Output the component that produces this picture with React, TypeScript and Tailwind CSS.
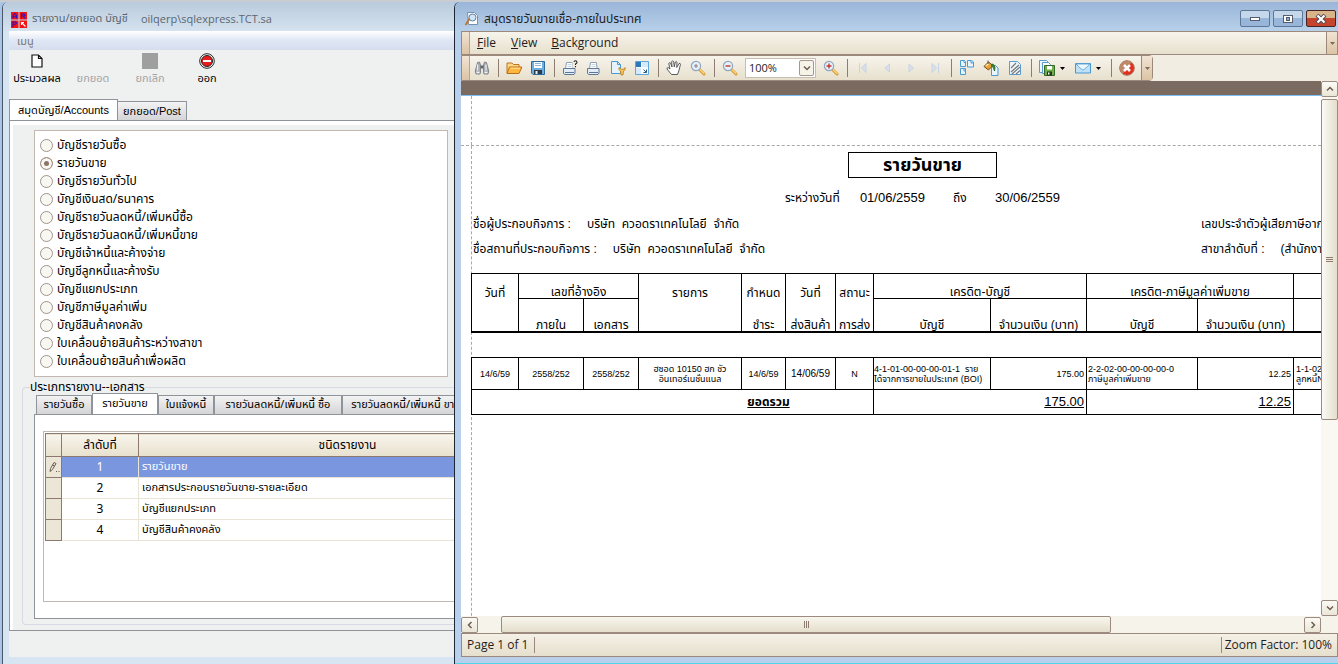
import { useState, type ReactNode } from "react";
import clsx from "clsx";

const accounts = [
  "บัญชีรายวันซื้อ",
  "รายวันขาย",
  "บัญชีรายวันทั่วไป",
  "บัญชีเงินสด/ธนาคาร",
  "บัญชีรายวันลดหนี้/เพิ่มหนี้ซื้อ",
  "บัญชีรายวันลดหนี้/เพิ่มหนี้ขาย",
  "บัญชีเจ้าหนี้และค้างจ่าย",
  "บัญชีลูกหนี้และค้างรับ",
  "บัญชีแยกประเภท",
  "บัญชีภาษีมูลค่าเพิ่ม",
  "บัญชีสินค้าคงคลัง",
  "ใบเคลื่อนย้ายสินค้าระหว่างสาขา",
  "ใบเคลื่อนย้ายสินค้าเพื่อผลิต",
];

const docTabs = [
  { label: "รายวันซื้อ", width: "w-14" },
  { label: "รายวันขาย", width: "w-[66px]" },
  { label: "ใบแจ้งหนี้", width: "w-14" },
  { label: "รายวันลดหนี้/เพิ่มหนี้ ซื้อ", width: "w-32" },
  { label: "รายวันลดหนี้/เพิ่มหนี้ ขาย", width: "w-32" },
];

const reports = [
  "รายวันขาย",
  "เอกสารประกอบรายวันขาย-รายละเอียด",
  "บัญชีแยกประเภท",
  "บัญชีสินค้าคงคลัง",
];

function Svg({ children }: { children: ReactNode }) {
  return (
    <svg viewBox="0 0 16 16" className="h-4 w-4 shrink-0" fill="none" aria-hidden="true">
      {children}
    </svg>
  );
}

function Lens({ sign }: { sign: "dot" | "minus" | "plus" }) {
  return (
    <Svg>
      <path d="M9.5 9.5l4.5 4.5" stroke="#d9972f" strokeWidth="3" strokeLinecap="round" />
      <path d="M9.8 9.4l4.2 4.2" stroke="#f9d67c" strokeWidth="1.4" strokeLinecap="round" />
      <circle cx="6" cy="6" r="4.6" fill="#e4f0fa" stroke="#8fa6c0" strokeWidth="1.2" />
      {sign === "dot" && <circle cx="6" cy="6" r="1.4" fill="#e07050" stroke="#9cb4d0" />}
      {sign === "minus" && <path d="M3.5 6h5" stroke="#c03a28" strokeWidth="1.4" />}
      {sign === "plus" && <path d="M3.5 6h5M6 3.5v5" stroke="#c03a28" strokeWidth="1.4" />}
    </Svg>
  );
}

function Printer({ ask }: { ask?: boolean }) {
  return (
    <Svg>
      <path d="M3.5 8.5l1-6h6l.5 6" fill="#fff" stroke="#8ca0ba" />
      <path d="M1.5 8.5h11.5v4.5l-1 1.5H2.5l-1-1.5z" fill="#e2ecf6" stroke="#5f7896" />
      <path d="M3 12.5h9" stroke="#5f7896" />
      <path d="M5.5 4.5h4M5.5 6.5h4" stroke="#c5d6e6" />
      {ask && <rect x="10.5" y="0" width="5.5" height="7.5" fill="#f2eee2" />}
      {ask && <path d="M12 2q.2-1.3 1.5-1.3T15 2.2q0 .9-1.5 1.8v1M13.5 6v1.2" stroke="#222" strokeWidth="1.1" />}
    </Svg>
  );
}

const tools: { name: string; icon: ReactNode; menu?: boolean; sep?: boolean }[] = [
  {
    name: "Find",
    sep: true,
    icon: (
      <Svg>
        <path d="M3.5 2.5l2-.5 1 3v7l-.5 2H2l-.7-3z" fill="#a9adb4" stroke="#6d727b" strokeWidth=".8" />
        <path d="M12.5 2.5l-2-.5-1 3v7l.5 2h4l.7-3z" fill="#a9adb4" stroke="#6d727b" strokeWidth=".8" />
        <path d="M6.8 5.5h2.4v3H6.8z" fill="#62666e" />
        <path d="M3.5 4.5v6M12 4.5v6" stroke="#eef0f3" strokeWidth="1.2" />
        <path d="M2.5 12.5h3M10.5 12.5h3" stroke="#f1f3f5" strokeWidth="1.5" />
      </Svg>
    ),
  },
  {
    name: "Open",
    icon: (
      <Svg>
        <path d="M1 13V3h5l1.5 1.5H13V7" fill="#ffd981" stroke="#b9762a" />
        <path d="M1 13.5L3.5 7H16l-3 6.5z" fill="#ffb83d" stroke="#bd6c16" />
        <path d="M4.5 8.2H14" stroke="#ffe4a4" />
      </Svg>
    ),
  },
  {
    name: "Save",
    sep: true,
    icon: (
      <Svg>
        <path d="M1.5 1.5h13v13H3L1.5 13z" fill="#6eafe0" stroke="#2f6b9c" />
        <path d="M4 2h8v6H4z" fill="#fff" />
        <path d="M5 3.5h6M5 5.5h6" stroke="#8fb5d6" />
        <path d="M4 10h8v4H4z" fill="#2c3b4a" />
        <path d="M5.5 11h2v3h-2z" fill="#e9f1f8" />
      </Svg>
    ),
  },
  { name: "Print", icon: <Printer ask /> },
  { name: "Quick Print", icon: <Printer /> },
  {
    name: "Page Setup",
    icon: (
      <Svg>
        <path d="M1.5 1.5h6l3 3v9h-9z" fill="#e6f3fd" stroke="#4b97cf" />
        <path d="M7.5 1.5v3h3" stroke="#4b97cf" />
        <path d="M9 7.5q-1 2.5 1.5 3.5l.5 4h2l.5-4Q16 10 15 7.5l-1.5 1.8h-2z" fill="#f6c85a" stroke="#bb7a1b" strokeWidth=".8" />
      </Svg>
    ),
  },
  {
    name: "Scale",
    sep: true,
    icon: (
      <Svg>
        <path d="M1.5 1.5h13v13h-13z" fill="#fafdff" stroke="#5fa5da" />
        <path d="M2 2h5v5H2z" fill="#2c78b8" />
        <path d="M8 2h6v5H8zM2 8h5v6H2z" fill="#d5eafa" />
        <path d="M9.5 9.5l3 3M12.5 9.5v3h-3" stroke="#275c88" />
      </Svg>
    ),
  },
  {
    name: "Hand Tool",
    icon: (
      <Svg>
        <path
          d="M5.5 14.5L1 9q-.3-1.7 1.5-1.2L4 9 2.8 3.7q.2-1.6 1.7-.7L6 7 5.7 1.5q.8-1.3 1.9 0L8.3 7l1-5q1-1 1.7.2L10.7 7.5 13 3.5q1.4-.6 1.5.8L12.8 11l-1.3 3.5z"
          fill="#fff"
          stroke="#4b4b4b"
          strokeWidth=".9"
        />
      </Svg>
    ),
  },
  { name: "Magnifier", sep: true, icon: <Lens sign="dot" /> },
];

const nav = [
  { name: "First Page", d: "M4.5 3v10M11 3.5L6.5 8l4.5 4.5z" },
  { name: "Previous Page", d: "M10.5 4L6 8l4.5 4z" },
  { name: "Next Page", d: "M6 4l4.5 4L6 12z" },
  { name: "Last Page", d: "M11.5 3v10M5 3.5L9.5 8 5 12.5z" },
];

const exportTools: typeof tools = [
  {
    name: "Multiple Pages",
    icon: (
      <Svg>
        <path d="M1.5.5h4l1 1v5h-5zM8.5.5h4l2 1.5v5h-6zM1.5 8.5h5v6h-5z" fill="#e8f5fe" stroke="#4b9bd1" />
        <path d="M5 1v1.5h1.5M12 1v2h2.5M5 9v2h1.5" stroke="#4b9bd1" />
      </Svg>
    ),
  },
  {
    name: "Background Color",
    icon: (
      <Svg>
        <path d="M8.5 5.5h4l2.5 2.5v7.5H8.5z" fill="#e8f5fe" stroke="#4b97cf" />
        <path d="M1 6.5L5.5 2 10 5.5 5.5 10z" fill="#e8a234" stroke="#7a4d13" />
        <path d="M3 6l2.7-2.5" stroke="#fff0b5" strokeWidth="1.3" />
        <path d="M5 4V.5" stroke="#555" />
        <path d="M9 4q4 .5 2.5 7-.5-4-3-5z" fill="#3c8b35" stroke="#276c25" />
      </Svg>
    ),
  },
  {
    name: "Watermark",
    sep: true,
    icon: (
      <Svg>
        <path d="M2.5 1.5h8l3 3v10h-11z" fill="#eef6fd" stroke="#5b9bcd" />
        <path d="M4 8l5-5M4 12l8-7M5 14l8-7M9 14l4-3.5" stroke="#77797c" strokeWidth="1.2" />
      </Svg>
    ),
  },
  {
    name: "Export Document",
    menu: true,
    icon: (
      <Svg>
        <path d="M.5.5h7l2 2v10h-9z" fill="#edf7ff" stroke="#5b9bcd" />
        <path d="M3.5 2.5h6l2 2v9h-8z" fill="#fff" stroke="#5b9bcd" />
        <path d="M5.5 5.5h10v10h-10z" fill="#6fae49" stroke="#35692a" />
        <path d="M8 6h5v3.5H8z" fill="#fff" />
        <path d="M8 11.5h5v4H8z" fill="#24391b" />
        <path d="M9 12.5h1.5v2H9z" fill="#fff" />
      </Svg>
    ),
  },
  {
    name: "Send via E-Mail",
    menu: true,
    sep: true,
    icon: (
      <Svg>
        <path d="M.5 3.5h15v9.5H.5z" fill="#bfe1f8" stroke="#4b96ce" />
        <path d="M1 4q6 6 7 6t7-6z" fill="#eef8ff" stroke="#64a8d9" />
      </Svg>
    ),
  },
  {
    name: "Exit",
    icon: (
      <Svg>
        <circle cx="8" cy="8" r="7.3" fill="#e0301f" stroke="#a8765a" />
        <path d="M1 9a7 7 0 0 1 12-6Q7 4 4 14 1.5 12 1 9z" fill="#bd8a6c" />
        <path d="M5 5l6 6M11 5l-6 6" stroke="#fff" strokeWidth="2.6" />
      </Svg>
    ),
  },
];

function Separator() {
  return (
    <div className="flex w-2 justify-center">
      <div className="h-[18px] w-px bg-[#8f7d72]" />
    </div>
  );
}

function ToolButtons({ items }: { items: typeof tools }) {
  return items.map((t) => (
    <div key={t.name} className="flex items-center">
      <button type="button" aria-label={t.name} className={clsx("flex h-6 items-center", t.menu ? "w-9 gap-1 pl-1" : "w-6 justify-center")}>
        {t.icon}
        {t.menu && <Caret />}
      </button>
      {t.sep && <Separator />}
    </div>
  ));
}

function Caret({ muted }: { muted?: boolean }) {
  return (
    <svg viewBox="0 0 5 3" className="ml-px h-[3px] w-[5px] shrink-0" aria-hidden="true">
      <path d="M0 0h5L2.5 3z" fill={muted ? "#7d6a5e" : "#000"} />
    </svg>
  );
}

function Grip() {
  return <div className="w-2 shrink-0 self-stretch border-r border-[#b9a390] bg-linear-to-b from-[#f1e4d3] to-[#dcc3a5]" />;
}

function Chevron({ d }: { d: string }) {
  return (
    <svg viewBox="0 0 8 8" className="h-2 w-2" fill="none" stroke="#6e5c52" strokeWidth="1.5" aria-hidden="true">
      <path d={d} />
    </svg>
  );
}

function ScrollButton({ label, d }: { label: string; d: string }) {
  return (
    <button
      type="button"
      aria-label={label}
      className="flex h-4 w-[17px] shrink-0 items-center justify-center rounded-xs border border-[#9c8b80] bg-linear-to-b from-[#fbfaf5] to-[#ebe6d6]"
    >
      <Chevron d={d} />
    </button>
  );
}

function AccountsWindow() {
  const [account, setAccount] = useState(1);
  return (
    <section className="ml-[2px] flex w-[452px] shrink-0 flex-col overflow-hidden rounded-tl-md border-l border-[#4a5766] bg-[#d7e4f1] pl-[6px] font-['Noto_Sans_Thai','Noto_Sans',sans-serif] text-[11px] text-black">
      <header className="-ml-[6px] flex h-[29px] shrink-0 items-center gap-[5px] bg-linear-to-b from-[#b9cbdc] to-[#d5e2ef] pt-[6px] pl-2 text-[#5c6670]">
        <svg viewBox="0 0 16 16" className="h-4 w-4 shrink-0" fill="none" aria-hidden="true">
          <path d="M0 0h7.5v7.5H0zM8.5 0H16v7.5H8.5zM0 8.5h7.5V16H0zM8.5 8.5H16V16H8.5z" fill="#f21414" />
          <path d="M2 6.5V3.5L3.8 1.5 5.5 3.5v3M2 4.7h3.5M10.5 6.5V2h2.5l1 1-1 1h-2.5M12.3 4l1.7 2.5M2 15v-5h2.5l1 1-1 1.3H2" stroke="#2a12c4" strokeWidth="1.1" />
          <path d="M10.5 10.5l4 4M10.5 13v-2.5H13" stroke="#fff" strokeWidth="1.1" />
        </svg>
        <h1 className="whitespace-nowrap text-[11px]">รายงาน/ยกยอด บัญชี</h1>
        <span className="ml-2 font-['Open_Sans',sans-serif] text-[11px]">oilqerp\sqlexpress.TCT.sa</span>
      </header>
      <div className="flex h-[19px] shrink-0 items-center bg-linear-to-b from-white via-[#dfe6f4] to-[#d6ddee] pt-1 pl-2 text-[#777]">เมนู</div>

      <div className="flex flex-1 flex-col bg-[#eff0f0]">
        <div className="flex h-[49px] shrink-0 items-start pt-[3px]">
          <button type="button" className="flex w-14 flex-col items-center gap-[2px]">
            <svg viewBox="0 0 12 14" className="h-4 w-3" fill="#fff" stroke="#111" strokeWidth="1.2" aria-hidden="true">
              <path d="M1 1h6.5L11 4.5V13H1zM7.5 1v3.5H11" />
            </svg>
            <span className="whitespace-nowrap">ประมวลผล</span>
          </button>
          <button type="button" disabled className="flex w-14 flex-col items-center pt-[18px] text-[#a3a3a3]">
            ยกยอด
          </button>
          <button type="button" disabled className="flex w-[58px] flex-col items-center gap-[2px] text-[#a3a3a3]">
            <span className="h-4 w-4 bg-[#9f9f9f]" />
            ยกเลิก
          </button>
          <button type="button" className="flex w-14 flex-col items-center gap-[2px]">
            <Svg>
              <circle cx="8" cy="8" r="7.3" fill="#fff" stroke="#222" />
              <circle cx="8" cy="8" r="5.5" fill="#e81c1c" stroke="#222" />
              <path d="M4 8h8" stroke="#fff" strokeWidth="2" />
            </Svg>
            ออก
          </button>
        </div>

        <div role="tablist" className="flex h-[21px] shrink-0 items-end font-['Liberation_Sans','Noto_Sans_Thai',sans-serif]">
          <button type="button" role="tab" aria-selected="true" className="h-[21px] w-[109px] whitespace-nowrap border border-b-0 border-[#8f949b] bg-white text-[11px]">
            สมุดบัญชี/Accounts
          </button>
          <button type="button" role="tab" aria-selected="false" className="h-[19px] w-[69px] whitespace-nowrap border border-b-0 border-l-0 border-[#8f949b] bg-linear-to-b from-[#f3f3f3] to-[#d5d5d8]">
            ยกยอด/Post
          </button>
        </div>

        <div className="flex flex-1 flex-col border-y border-l border-[#8f949b] bg-white pt-1 pl-[3px]">
          <div className="flex flex-1 flex-col bg-[#eff0f0] pt-[5px] pb-[5px] pl-[9px]">
            <div role="radiogroup" aria-label="สมุดบัญชี" className="mr-[6px] ml-3 border border-[#c3b8af] bg-white pt-[5px] pb-[6px] pl-[5px] text-xs">
              {accounts.map((a, i) => (
                <label key={a} className="flex h-[18px] items-center gap-1">
                  <input
                    type="radio"
                    name="account"
                    checked={account === i}
                    onChange={() => setAccount(i)}
                    className="h-[13px] w-[13px] appearance-none rounded-full border border-[#a0938b] bg-[#f8f7f2] checked:bg-[#8d7566] checked:shadow-[inset_0_0_0_3px_#f8f7f2]"
                  />
                  {a}
                </label>
              ))}
            </div>

            <fieldset className="mt-1 flex min-w-0 flex-1 flex-col rounded-l border border-r-0 border-[#d5dae4] pb-[5px] pl-[11px]">
              <legend className="-ml-1 h-3 text-xs leading-3">ประเภทรายงาน--เอกสาร</legend>
              <div role="tablist" className="flex h-[21px] shrink-0 items-end pl-[2px]">
                {docTabs.map((t, i) => (
                  <button
                    key={t.label}
                    type="button"
                    role="tab"
                    aria-selected={i === 1}
                    className={clsx(
                      "shrink-0 whitespace-nowrap border border-b-0 border-[#8f949b] leading-3",
                      t.width,
                      i === 1 ? "h-[21px] bg-white" : "h-[19px] bg-linear-to-b from-[#f3f3f3] to-[#d5d5d8]",
                    )}
                  >
                    {t.label}
                  </button>
                ))}
              </div>
              <div className="flex-1 border border-r-0 border-[#8f949b] bg-white py-4 pl-2">
                <div className="h-full border border-r-0 border-[#c3b8af] pt-px pl-px">
                  <table className="w-[512px] table-fixed border-collapse text-xs">
                    <colgroup>
                      <col className="w-4" />
                      <col className="w-[77px]" />
                      <col />
                    </colgroup>
                    <thead>
                      <tr className="h-[23px] border border-[#8c7a70] bg-linear-to-b from-[#f8f5ec] to-[#e8e1ce]">
                        <th className="border border-[#8c7a70] p-0" />
                        <th className="border border-[#8c7a70] p-0 font-normal">ลำดับที่</th>
                        <th className="border border-[#8c7a70] p-0 font-normal">ชนิดรายงาน</th>
                      </tr>
                    </thead>
                    <tbody>
                      {reports.map((r, i) => (
                        <tr key={r} className={clsx("h-[21px]", i === 0 && "bg-[#7a96df] text-white")}>
                          <td className="border border-[#8c7a70] bg-[#ece6d6] p-0">
                            {i === 0 && (
                              <svg viewBox="0 0 12 12" className="mx-auto h-3 w-3" fill="none" stroke="#6e5c52" aria-hidden="true">
                                <path d="M2 10.5l.5-3L6 1.5l2 1-3.5 6zM4.5 4l2 1M8 10.5h1M10.5 10.5h1" />
                              </svg>
                            )}
                          </td>
                          <td className="border-r border-b border-[#e9e4d6] p-0 text-center">{i + 1}</td>
                          <td className="border-b border-[#e9e4d6] p-0 pl-[3px] text-[11px]">{r}</td>
                        </tr>
                      ))}
                    </tbody>
                  </table>
                </div>
              </div>
            </fieldset>
          </div>
        </div>
        <footer className="h-[26px] shrink-0" />
      </div>
      <div className="h-[7px] shrink-0" />
    </section>
  );
}

const cell = "border border-black p-0 text-center align-bottom font-normal leading-3 whitespace-nowrap";

function SalesJournal() {
  return (
    <article className="-ml-px w-[962px] font-['Liberation_Sans','Noto_Sans_Thai',sans-serif] text-[12px] leading-4 text-black">
      <div className="flex w-[903px] flex-col items-center pt-[6px]">
        <h2 className="flex h-[26px] w-[149px] items-center justify-center border border-black text-lg font-bold">รายวันขาย</h2>
        <p className="mt-3 flex w-[275px] items-center justify-between">
          <span>ระหว่างวันที่</span>
          <span className="text-[13px]">01/06/2559</span>
          <span className="px-2">ถึง</span>
          <span className="text-[13px]">30/06/2559</span>
        </p>
      </div>
      <div className="mt-[10px] grid grid-cols-[728px_1fr] gap-y-[9px] pl-[2px]">
        <p className="flex gap-4">
          <span>ชื่อผู้ประกอบกิจการ :</span>
          <span>บริษัท&nbsp; ควอดราเทคโนโลยี&nbsp; จำกัด</span>
        </p>
        <p>เลขประจำตัวผู้เสียภาษีอากร :</p>
        <p className="flex gap-4">
          <span>ชื่อสถานที่ประกอบกิจการ :</span>
          <span>บริษัท&nbsp; ควอดราเทคโนโลยี&nbsp; จำกัด</span>
        </p>
        <p className="flex gap-4">
          <span>สาขาลำดับที่ :</span>
          <span>(สำนักงานใหญ่)</span>
        </p>
      </div>
      <table className="mt-4 w-full table-fixed border-collapse">
        <colgroup>
          <col className="w-[47px]" />
          <col className="w-[65px]" />
          <col className="w-[55px]" />
          <col className="w-[103px]" />
          <col className="w-[44px]" />
          <col className="w-[50px]" />
          <col className="w-[38px]" />
          <col className="w-[117px]" />
          <col className="w-[96px]" />
          <col className="w-[111px]" />
          <col className="w-[96px]" />
          <col />
        </colgroup>
        <thead>
          <tr className="h-[25px]">
            <th className={clsx(cell, "border-b-0")}>วันที่</th>
            <th colSpan={2} className={cell}>เลขที่อ้างอิง</th>
            <th className={clsx(cell, "border-b-0")}>รายการ</th>
            <th className={clsx(cell, "border-b-0")}>กำหนด</th>
            <th className={clsx(cell, "border-b-0")}>วันที่</th>
            <th className={clsx(cell, "border-b-0")}>สถานะ</th>
            <th colSpan={2} className={cell}>เครดิต-บัญชี</th>
            <th colSpan={2} className={cell}>เครดิต-ภาษีมูลค่าเพิ่มขาย</th>
            <th className={cell} />
          </tr>
          <tr className="h-[33px] border-b-2 border-black">
            <th className={clsx(cell, "border-t-0 border-b-2")} />
            <th className={clsx(cell, "border-b-2")}>ภายใน</th>
            <th className={clsx(cell, "border-b-2")}>เอกสาร</th>
            <th className={clsx(cell, "border-t-0 border-b-2")} />
            <th className={clsx(cell, "border-t-0 border-b-2")}>ชำระ</th>
            <th className={clsx(cell, "border-t-0 border-b-2")}>ส่งสินค้า</th>
            <th className={clsx(cell, "border-t-0 border-b-2")}>การส่ง</th>
            <th className={clsx(cell, "border-b-2")}>บัญชี</th>
            <th className={clsx(cell, "border-b-2")}>จำนวนเงิน (บาท)</th>
            <th className={clsx(cell, "border-b-2")}>บัญชี</th>
            <th className={clsx(cell, "border-b-2")}>จำนวนเงิน (บาท)</th>
            <th className={clsx(cell, "border-b-2")} />
          </tr>
        </thead>
        <tbody>
          <tr className="h-[26px]">
            <td colSpan={12} />
          </tr>
          <tr className="h-8 text-[9px] leading-[10px] *:border *:border-black *:p-0 *:text-center">
            <td>14/6/59</td>
            <td>2558/252</td>
            <td>2558/252</td>
            <td>
              ฮซอด 10150 ฮก ชัว
              <br />
              อินเทอร์เนชั่นแนล
            </td>
            <td>14/6/59</td>
            <td className="text-[10px]">14/06/59</td>
            <td>N</td>
            <td className="text-left! whitespace-nowrap">
              4-1-01-00-00-00-01-1&nbsp; ราย
              <br />
              ได้จากการขายในประเทศ (BOI)
            </td>
            <td className="pr-[2px]! text-right!">175.00</td>
            <td className="pl-px! text-left! whitespace-nowrap">
              2-2-02-00-00-00-00-0
              <br />
              ภาษีมูลค่าเพิ่มขาย
            </td>
            <td className="pr-[2px]! text-right!">12.25</td>
            <td className="pl-[2px]! text-left! whitespace-nowrap">
              1-1-02-01-00-00-00-0
              <br />
              ลูกหนี้NTC
            </td>
          </tr>
          <tr className="h-[25px] text-[13px] underline *:border *:border-black *:p-0">
            <td colSpan={7} className="pl-[192px]! text-center text-xs font-bold">ยอดรวม</td>
            <td colSpan={2} className="pr-[2px]! text-right">175.00</td>
            <td colSpan={2} className="pr-[2px]! text-right">12.25</td>
            <td />
          </tr>
        </tbody>
      </table>
    </article>
  );
}

function PreviewWindow() {
  const [zoom, setZoom] = useState("100%");
  return (
    <section className="flex min-w-0 flex-1 flex-col rounded-tl-md border-l border-[#1d2733] bg-[#b9d0ec] pl-[6px] font-['Open_Sans','Noto_Sans_Thai',sans-serif] text-xs text-[#1e1e1e]">
      <header className="-ml-[6px] flex h-[29px] shrink-0 items-center gap-1 rounded-tl-md bg-linear-to-b from-[#9ab5d8] to-[#b7d0ea] pt-1 pr-[2px] pl-[9px]">
        <Svg>
          <path d="M3.5 1.5h7l3 3v9h-9z" fill="#fff" stroke="#7290b2" />
          <path d="M6 7l-4.5 7" stroke="#b97834" strokeWidth="2" />
          <circle cx="8.5" cy="6.5" r="3.5" fill="#cfe5f8" stroke="#647d99" />
        </Svg>
        <h1 className="flex-1 text-xs font-normal">สมุดรายวันขายเชื่อ-ภายในประเทศ</h1>
        <div className="flex gap-[3px]">
          <button type="button" aria-label="Minimize" className="flex h-[17px] w-[30px] items-center justify-center rounded-xs border border-[#5d7696] bg-linear-to-b from-[#c5d7eb] from-50% to-[#98b6d9] to-50%">
            <span className="h-1 w-[10px] border border-[#555d68] bg-white" />
          </button>
          <button type="button" aria-label="Maximize" className="flex h-[17px] w-[30px] items-center justify-center rounded-xs border border-[#5d7696] bg-linear-to-b from-[#c5d7eb] from-50% to-[#98b6d9] to-50%">
            <span className="flex h-2 w-[10px] items-center justify-center border border-[#555d68] bg-white">
              <span className="h-1 w-1 border border-[#555d68] bg-[#8ba8cc]" />
            </span>
          </button>
          <button type="button" aria-label="Close" className="flex h-[17px] w-[30px] items-center justify-center rounded-xs border border-[#4b2222] bg-linear-to-b from-[#d8b48a] from-50% to-[#c5442d] to-50%">
            <svg viewBox="0 0 12 10" className="h-[10px] w-3" aria-hidden="true">
              <path d="M2 1l8 8M10 1L2 9" stroke="#4d4d5a" strokeWidth="4" />
              <path d="M2.5 1.5l7 7M9.5 1.5l-7 7" stroke="#fff" strokeWidth="2.2" />
            </svg>
          </button>
        </div>
      </header>

      <nav className="flex h-6 shrink-0 items-center border border-[#9c897c] bg-linear-to-b from-[#f7f4ec] to-[#e7e0cd]">
        <Grip />
        <button type="button" className="ml-[7px]"><u>F</u>ile</button>
        <button type="button" className="ml-[15px]"><u>V</u>iew</button>
        <button type="button" className="ml-[14px]"><u>B</u>ackground</button>
        <button type="button" aria-label="Menu options" className="ml-auto flex h-full w-[11px] items-center justify-center border-l border-[#9c897c] bg-linear-to-b from-[#f1e4d3] to-[#dcc3a5]">
          <Caret muted />
        </button>
      </nav>

      <div className="flex shrink-0 bg-[#f1ede3]">
        <div className="flex h-[26px] items-center rounded-r border border-[#9c897c] bg-linear-to-b from-[#f7f4ec] to-[#e7e0cd]">
          <Grip />
          <ToolButtons items={tools} />
          <button type="button" aria-label="Zoom Out" className="flex h-6 w-6 items-center justify-center">
            <Lens sign="minus" />
          </button>
          <div className="relative mx-[3px]">
            <select
              aria-label="Zoom"
              value={zoom}
              onChange={(e) => setZoom(e.target.value)}
              className="block h-5 w-[71px] appearance-none border border-[#c9bdb1] bg-white pl-[3px] text-[11px]"
            >
              <option>100%</option>
              <option>75%</option>
              <option>50%</option>
            </select>
            <span className="pointer-events-none absolute top-[2px] right-[2px] flex h-4 w-[15px] items-center justify-center rounded-xs border border-[#a4978b] bg-[#f6f3e9]">
              <Chevron d="M1 2.5l3 3 3-3" />
            </span>
          </div>
          <button type="button" aria-label="Zoom In" className="flex h-6 w-6 items-center justify-center">
            <Lens sign="plus" />
          </button>
          <Separator />
          {nav.map((n) => (
            <button key={n.name} type="button" disabled aria-label={n.name} className="flex h-6 w-6 items-center justify-center">
              <Svg>
                <path d={n.d} fill="#d9e0ec" stroke="#c8d3e3" />
              </Svg>
            </button>
          ))}
          <Separator />
          <ToolButtons items={exportTools} />
          <button type="button" aria-label="Toolbar options" className="ml-[2px] flex h-full w-[11px] items-center justify-center border-l border-[#9c897c] bg-linear-to-b from-[#f1e4d3] to-[#dcc3a5]">
            <Caret muted />
          </button>
        </div>
      </div>

      <div className="flex min-h-0 flex-1">
        <div className="flex min-w-0 flex-1 flex-col">
          <div className="h-[15px] shrink-0 border-b border-[#7cc0f5] bg-[#7a6a60]" />
          <main className="flex-1 overflow-hidden bg-white pl-[10px]">
            <div className="-ml-[10px] h-[50px] border-b border-dashed border-[#a9a9a4] pl-[10px]">
              <div className="h-full border-l border-dashed border-[#a9a9a4]" />
            </div>
            <div className="h-full border-l border-dashed border-[#a9a9a4]">
              <SalesJournal />
            </div>
          </main>
        </div>
        <div className="flex w-[17px] shrink-0 flex-col bg-[#faf8f3]">
          <ScrollButton label="Scroll up" d="M1 5.5l3-3 3 3" />
          <div className="flex-1 pt-[2px]">
            <div className="flex h-[64%] flex-col items-center justify-center gap-px rounded-xs border border-[#9c8b80] bg-linear-to-r from-[#fbfaf5] to-[#e4decb]">
              {[0, 1, 2].map((i) => (
                <span key={i} className="h-px w-[7px] bg-[#8d7b70]" />
              ))}
            </div>
          </div>
          <ScrollButton label="Scroll down" d="M1 2.5l3 3 3-3" />
        </div>
      </div>

      <div className="flex h-[17px] shrink-0 items-center bg-[#f6f3ea] pr-[17px]">
        <ScrollButton label="Scroll left" d="M5.5 1l-3 3 3 3" />
        <div className="flex h-full flex-1 pl-[23px]">
          <div className="flex w-[76%] items-center justify-center gap-px rounded-xs border border-[#9c8b80] bg-linear-to-b from-[#f8f6ee] to-[#e4decb]">
            {[0, 1, 2].map((i) => (
              <span key={i} className="h-[7px] w-px bg-[#8d7b70]" />
            ))}
          </div>
        </div>
        <ScrollButton label="Scroll right" d="M2.5 1l3 3-3 3" />
      </div>

      <footer className="flex h-6 shrink-0 items-center justify-between border border-[#9c897c] bg-linear-to-b from-[#f5f1e7] to-[#e6dfcd] pl-[5px]">
        <span className="flex items-center gap-[6px]">
          Page 1 of 1
          <span className="h-4 w-px bg-[#9c897c]" />
        </span>
        <span className="flex items-center gap-[3px] pr-[5px]">
          <span className="h-4 w-px bg-[#9c897c]" />
          Zoom Factor: 100%
        </span>
      </footer>
      <div className="-ml-[6px] h-[7px] shrink-0 border-b border-[#4fd6ea]" />
    </section>
  );
}

export default function App() {
  return (
    <div className="flex h-screen min-h-[640px] overflow-hidden border-t-2 border-[#c9ccd0] bg-[#a9c4e4]">
      <AccountsWindow />
      <PreviewWindow />
    </div>
  );
}
